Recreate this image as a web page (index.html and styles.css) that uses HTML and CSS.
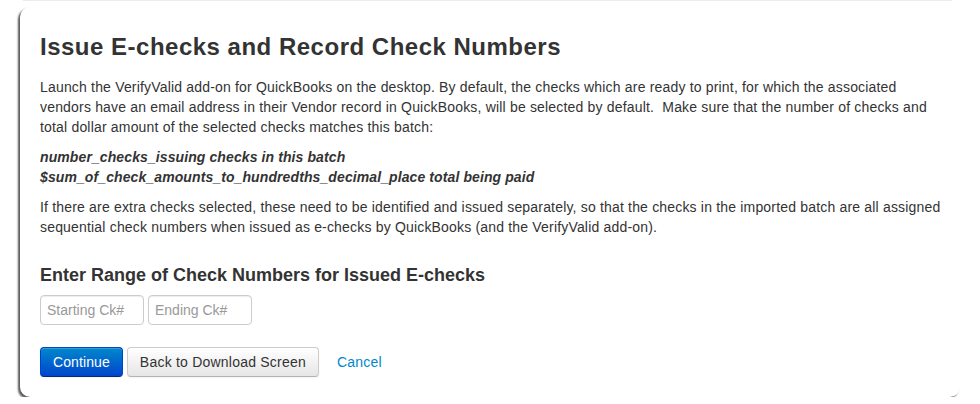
FILE: index.html
```html
<!DOCTYPE html>
<html>
<head>
<meta charset="utf-8">
<link rel="stylesheet" href="styles.css">
</head>
<body>
<div class="prev-edge"></div>
<div class="card">
  <h1 class="title">Issue E-checks and Record Check Numbers</h1>
  <p class="text">Launch the VerifyValid add-on for QuickBooks on the desktop. By default, the checks which are ready to print, for which the associated vendors have an email address in their Vendor record in QuickBooks, will be selected by default.&nbsp; Make sure that the number of checks and total dollar amount of the selected checks matches this batch:</p>
  <p class="text strong">number_checks_issuing checks in this batch<br>$sum_of_check_amounts_to_hundredths_decimal_place total being paid</p>
  <p class="text">If there are extra checks selected, these need to be identified and issued separately, so that the checks in the imported batch are all assigned sequential check numbers when issued as e-checks by QuickBooks (and the VerifyValid add-on).</p>
  <h3 class="subtitle">Enter Range of Check Numbers for Issued E-checks</h3>
  <div class="inputs">
    <input class="field" type="text" placeholder="Starting Ck#">
    <input class="field" type="text" placeholder="Ending Ck#">
  </div>
  <div class="actions">
    <button class="btn btn-primary">Continue</button>
    <button class="btn">Back to Download Screen</button>
    <a class="link" href="#">Cancel</a>
  </div>
</div>
</body>
</html>
```
FILE: styles.css
```css
html, body {
  margin: 0;
  padding: 0;
  background: #fff;
}
body {
  font-family: "Liberation Sans", Arial, sans-serif;
  font-size: 14px;
  line-height: 20px;
  color: #333;
}
.prev-edge {
  height: 1px;
  margin: 0 28px 0 23px;
  background: #ececec;
}
.card {
  margin: 6px 20px 0 20px;
  padding: 10px 15px 20px 20px;
  background: #fff;
  border-radius: 10px;
  box-shadow: -2px 2px 2px #5a5a5a;
}
.title {
  margin: 15px 0 15px 0;
  font-size: 24px;
  line-height: 30px;
  font-weight: bold;
  letter-spacing: 0.5px;
  color: #333;
}
.text {
  margin: 0 0 10px 0;
  letter-spacing: 0.18px;
}
.strong {
  font-weight: bold;
  font-style: italic;
  letter-spacing: 0.1px;
}
.subtitle {
  margin: 26px 0 8px 0;
  font-size: 18px;
  line-height: 24px;
  font-weight: bold;
}
.inputs {
  display: flex;
  gap: 4px;
}
.field {
  box-sizing: border-box;
  width: 104px;
  height: 30px;
  padding: 4px 6px;
  border: 1px solid #ccc;
  border-radius: 4px;
  font-family: "Liberation Sans", Arial, sans-serif;
  font-size: 14px;
  color: #555;
  box-shadow: inset 0 1px 1px rgba(0,0,0,0.075);
}
.field::placeholder {
  color: #999;
}
.actions {
  display: flex;
  align-items: center;
  gap: 4px;
  margin-top: 22px;
}
.btn {
  box-sizing: border-box;
  height: 30px;
  padding: 4px 12px;
  font-family: "Liberation Sans", Arial, sans-serif;
  font-size: 14px;
  line-height: 20px;
  letter-spacing: 0.22px;
  color: #333;
  border: 1px solid #ccc;
  border-bottom-color: #b3b3b3;
  border-radius: 4px;
  background: linear-gradient(#ffffff, #e6e6e6);
  box-shadow: inset 0 1px 0 rgba(255,255,255,0.2), 0 1px 2px rgba(0,0,0,0.05);
}
.btn-primary {
  color: #fff;
  border-color: #0044cc #0044cc #002a80;
  background: linear-gradient(#0088cc, #0044cc);
  padding: 4px 12px;
  letter-spacing: 0.1px;
}
.link {
  margin-left: 14px;
  color: #0088cc;
  letter-spacing: 0.2px;
  text-decoration: none;
}
```
